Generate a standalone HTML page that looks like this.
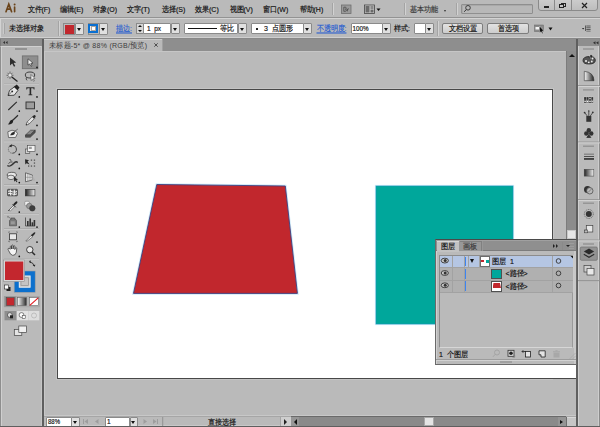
<!DOCTYPE html>
<html><head><meta charset="utf-8">
<style>
*{margin:0;padding:0;box-sizing:border-box}
html,body{width:600px;height:427px;overflow:hidden;background:#bababa;font-family:"Liberation Sans",sans-serif;font-size:7px;color:#111}
.a{position:absolute}
.t{position:absolute;white-space:nowrap;line-height:1;-webkit-text-stroke:0.15px currentColor;transform:scaleY(1.12);transform-origin:0 50%}
.box{position:absolute;background:#fff;border:1px solid #8a8a8a;border-radius:1px}
.dd{position:absolute;background:#e0e0e0;border:1px solid #8a8a8a;border-radius:1px}
.dd:after{content:"";position:absolute;left:50%;top:50%;margin-left:-2.5px;margin-top:-1px;border-left:2.5px solid transparent;border-right:2.5px solid transparent;border-top:3px solid #111}
.sep{position:absolute;width:1px;background:#a4a4a4;box-shadow:1px 0 0 #d2d2d2}
.btn{position:absolute;background:linear-gradient(#e2e2e2,#cdcdcd);border:1px solid #7d7d7d;border-radius:2px;text-align:center;line-height:10px;font-size:7px}
.lnk{color:#2a5fd0;text-decoration:underline;text-decoration-thickness:0.6px;text-underline-offset:0.5px}
.hd{position:absolute;background:#8e8e8e}
.ic{position:absolute}
</style></head><body>
<!-- ============ menu bar ============ -->
<div class="a" style="left:0;top:0;width:600px;height:17px;background:#bababa"></div>
<div class="a" style="left:0;top:17px;width:600px;height:1px;background:#939393"></div>
<svg class="a" style="left:0;top:0" width="20" height="17"><g stroke="#6a4319" stroke-width="1.65" fill="none" stroke-linecap="round"><path d="M6 11.7L8.8 4.1L11.6 11.7M7.1 9.1H10.5"/><path d="M14.6 7V11.7"/></g><circle cx="14.6" cy="4.5" r="1" fill="#6a4319"/></svg>
<div class="t" style="left:27.5px;top:5.5px">文件(F)</div>
<div class="t" style="left:60px;top:5.5px">编辑(E)</div>
<div class="t" style="left:93px;top:5.5px">对象(O)</div>
<div class="t" style="left:127px;top:5.5px">文字(T)</div>
<div class="t" style="left:162px;top:5.5px">选择(S)</div>
<div class="t" style="left:195px;top:5.5px">效果(C)</div>
<div class="t" style="left:229.5px;top:5.5px">视图(V)</div>
<div class="t" style="left:263px;top:5.5px">窗口(W)</div>
<div class="t" style="left:299.5px;top:5.5px">帮助(H)</div>
<div class="sep" style="left:332px;top:3px;height:12px"></div>
<!-- Br icon -->
<svg class="a" style="left:340px;top:4px" width="45" height="11">
<rect x="1.5" y="1" width="9.5" height="8.5" fill="#9a9a9a" stroke="#6e6e6e" stroke-width="0.8"/>
<path d="M3.8 3.2V7.3H5.3Q6.5 7.3 6.5 6.2Q6.5 5.3 5.4 5.2Q6.3 5 6.3 4.2Q6.3 3.2 5.2 3.2Z" fill="none" stroke="#444" stroke-width="0.7"/>
<path d="M7.5 7.3V4.8M7.5 5.6Q8 4.7 9 4.8" fill="none" stroke="#444" stroke-width="0.7"/>
<rect x="24.5" y="1" width="10" height="8.5" fill="#c8c8c8" stroke="#444" stroke-width="0.8"/>
<rect x="25.5" y="2" width="4" height="6.5" fill="#6a6a6a"/>
<rect x="30.5" y="2" width="3" height="3" fill="#8a8a8a"/><rect x="30.5" y="5.6" width="3" height="2.9" fill="#6a6a6a"/>
<path d="M36.5 4.5H40.5L38.5 7Z" fill="#111"/>
</svg>
<div class="sep" style="left:404px;top:3px;height:12px"></div>
<div class="t" style="left:410px;top:5.5px;color:#383838">基本功能</div>
<div class="a" style="left:444px;top:9.5px;border-left:1.5px solid transparent;border-right:1.5px solid transparent;border-top:2px solid #333"></div>
<div class="sep" style="left:456px;top:3px;height:12px"></div>
<!-- search -->
<div class="a" style="left:461px;top:3.5px;width:72px;height:10px;background:#b8b8b8;border:1px solid #8f8f8f;border-radius:1px;box-shadow:inset 1px 1px 0 #a9a9a9"></div>
<svg class="ic" style="left:463px;top:4px" width="9" height="9"><circle cx="5" cy="3.8" r="2.3" fill="none" stroke="#333" stroke-width="0.9"/><line x1="3.3" y1="5.5" x2="1.2" y2="7.8" stroke="#333" stroke-width="1"/></svg>
<!-- window buttons -->
<div class="a" style="left:538px;top:-2px;width:60px;height:13px;background:linear-gradient(#cdcdcd,#bdbdbd);border:1px solid #8a8a8a;border-radius:0 0 3px 3px"></div>
<div class="a" style="left:554px;top:0;width:1px;height:10px;background:#8a8a8a"></div>
<div class="a" style="left:571px;top:0;width:1px;height:10px;background:#8a8a8a"></div>
<div class="a" style="left:544px;top:6px;width:5px;height:1.5px;background:#222"></div>
<div class="a" style="left:561px;top:2.5px;width:5px;height:4px;border:1px solid #222"></div>
<div class="a" style="left:559px;top:4px;width:5px;height:4px;border:1px solid #222;background:#c5c5c5"></div>
<svg class="ic" style="left:581px;top:2px" width="7" height="7"><path d="M1 1L6 6M6 1L1 6" stroke="#222" stroke-width="1.2"/></svg>

<!-- ============ control bar ============ -->
<div class="a" style="left:0;top:18px;width:600px;height:20px;background:#bababa;border-top:1px solid #d3d3d3;border-left:1px solid #d3d3d3"></div>
<div class="a" style="left:0;top:37px;width:600px;height:1px;background:#cfcfcf"></div>
<div class="a" style="left:0;top:38px;width:600px;height:1px;background:#888"></div>
<div class="a" style="left:3px;top:22.5px;width:2px;height:11.5px;background:#cacaca;border-right:1px solid #a5a5a5"></div>
<div class="t" style="left:9px;top:25px">未选择对象</div>
<div class="sep" style="left:58px;top:21px;height:15px"></div>
<!-- fill -->
<div class="a" style="left:63px;top:23px;width:12px;height:11.5px;background:#bababa;border:1px solid #8a8a8a"></div>
<div class="a" style="left:64.5px;top:24.5px;width:9px;height:9px;background:#c1272d"></div>
<div class="dd" style="left:74.5px;top:23px;width:9px;height:12px"></div>
<!-- stroke -->
<div class="a" style="left:87.5px;top:23px;width:12px;height:12px;background:#bababa;border:1px solid #8a8a8a"></div>
<div class="a" style="left:88.2px;top:23.8px;width:9.8px;height:9.4px;border:2px solid #0a6fd0;background:#e8e8e8"></div>
<div class="a" style="left:90.6px;top:26.1px;width:5px;height:4.8px;border:1px solid #b0a59c;background:#fff"></div>
<div class="dd" style="left:99px;top:23px;width:9px;height:12px"></div>
<div class="t lnk" style="left:116px;top:24.5px">描边:</div>
<!-- spinner -->
<div class="a" style="left:135.5px;top:23px;width:8px;height:10.5px;background:#d6d6d6;border:1px solid #8a8a8a"></div>
<div class="a" style="left:137.5px;top:24.5px;border-left:2px solid transparent;border-right:2px solid transparent;border-bottom:2.5px solid #111"></div>
<div class="a" style="left:137.5px;top:29.5px;border-left:2px solid transparent;border-right:2px solid transparent;border-top:2.5px solid #111"></div>
<div class="box" style="left:143px;top:23px;width:28px;height:11px"></div>
<div class="t" style="left:147px;top:25.5px;font-size:6.5px">1&nbsp; px</div>
<div class="dd" style="left:170.5px;top:23px;width:9px;height:11px"></div>
<!-- stroke profile -->
<div class="box" style="left:184px;top:23px;width:54px;height:11px"></div>
<div class="a" style="left:188px;top:27.5px;width:29px;height:1.5px;background:#111"></div>
<div class="t" style="left:220px;top:25px">等比</div>
<div class="dd" style="left:237.5px;top:23px;width:9px;height:11px"></div>
<!-- brush -->
<div class="box" style="left:251px;top:23px;width:53px;height:11px"></div>
<div class="a" style="left:256px;top:28px;width:1.5px;height:1.5px;background:#222"></div>
<div class="t" style="left:264px;top:25px">3&nbsp; 点圆形</div>
<div class="dd" style="left:303px;top:23px;width:9px;height:11px"></div>
<div class="t lnk" style="left:316.5px;top:24.5px">不透明度:</div>
<div class="box" style="left:350.5px;top:23px;width:32px;height:11px"></div>
<div class="t" style="left:352.5px;top:25.5px;font-size:6.3px">100%</div>
<div class="dd" style="left:382px;top:23px;width:9px;height:11px"></div>
<div class="t" style="left:394px;top:24.5px">样式:</div>
<div class="box" style="left:414px;top:23px;width:12px;height:11px"></div>
<div class="dd" style="left:425px;top:23px;width:9px;height:11px"></div>
<div class="sep" style="left:437px;top:21px;height:15px"></div>
<div class="btn" style="left:442px;top:22.5px;width:41px;height:11.5px"><span style="display:inline-block;transform:scaleY(1.12);-webkit-text-stroke:0.15px currentColor">文档设置</span></div>
<div class="btn" style="left:487px;top:22.5px;width:42px;height:11.5px"><span style="display:inline-block;transform:scaleY(1.12);-webkit-text-stroke:0.15px currentColor">首选项</span></div>
<!-- isolate icon -->
<svg class="a" style="left:533px;top:23px" width="60" height="12">
<rect x="1.5" y="2" width="9" height="6.5" fill="#8a8a8a" stroke="#666" stroke-width="0.5"/>
<rect x="2.5" y="4" width="3.5" height="2.5" fill="#f4f4f4"/>
<path d="M6.5 3L6.5 10L8 8.7L9.3 10.8L10.2 10.3L9 8.2L11 7.9Z" fill="#111" stroke="#eee" stroke-width="0.4"/>
<path d="M15.5 4.5H19.5L17.5 7.5Z" fill="#111"/>
<path d="M49 5L51.3 5L50.15 6.5Z" fill="#222"/>
<g fill="#444"><rect x="52" y="2.5" width="0.8" height="5.5"/><rect x="53.3" y="2.6" width="4.3" height="0.8"/><rect x="53.3" y="4.4" width="4.3" height="0.8"/><rect x="53.3" y="6.2" width="4.3" height="0.8"/><rect x="53.3" y="7.8" width="4.3" height="0.6"/></g>
</svg>
<!-- ============ toolbar ============ -->
<div class="hd" style="left:0;top:39px;width:42px;height:7px"></div>
<svg class="a" style="left:3px;top:40.6px" width="6" height="4"><path d="M0 1.6L2 0.1V3.1ZM2.6 1.6L4.6 0.1V3.1Z" fill="#333"/></svg>
<div class="a" style="left:0;top:46px;width:42px;height:381px;background:#bababa;border-left:1px solid #8e8e8e;border-top:1px solid #d0d0d0;box-shadow:inset 1px 0 0 #cfcfcf"></div>
<div class="a" style="left:0;top:39px;width:1px;height:7px;background:#7a7a7a"></div>
<div class="a" style="left:15px;top:48px;width:12px;height:2px;background:#939393"></div>
<div class="a" style="left:40.5px;top:46px;width:1px;height:381px;background:#c6c6c6"></div>
<div class="a" style="left:42px;top:39px;width:2px;height:388px;background:#5f5f5f"></div>
<svg class="a" style="left:0;top:0" width="42" height="345">
<defs>
<linearGradient id="gr1" x1="0" x2="1"><stop offset="0" stop-color="#1a1a1a"/><stop offset="1" stop-color="#f4f4f4"/></linearGradient>
<linearGradient id="gr2" x1="0" x2="1"><stop offset="0" stop-color="#fafafa"/><stop offset="1" stop-color="#2a2a2a"/></linearGradient>
</defs>
<!-- separators -->
<g fill="#a6a6a6">
<rect x="4" y="83" width="35" height="0.8"/><rect x="4" y="140.8" width="35" height="0.8"/>
<rect x="4" y="184.3" width="35" height="0.8"/><rect x="4" y="213.6" width="35" height="0.8"/>
<rect x="4" y="228.3" width="35" height="0.8"/><rect x="4" y="258" width="35" height="0.8"/>
</g>
<g fill="#d4d4d4">
<rect x="4" y="83.8" width="35" height="0.6"/><rect x="4" y="141.6" width="35" height="0.6"/>
<rect x="4" y="185.1" width="35" height="0.6"/><rect x="4" y="214.4" width="35" height="0.6"/>
<rect x="4" y="229.1" width="35" height="0.6"/><rect x="4" y="258.8" width="35" height="0.6"/>
</g>
<!-- selection -->
<path d="M10 57.5L10 65.5L12.2 63.6L14 66.8L15.3 66.1L13.6 63L16.2 62.6Z" fill="#2e2e2e"/>
<rect x="22.3" y="55.9" width="15.6" height="12.8" fill="#8e8e8e" stroke="#6c6c6c" stroke-width="0.8"/>
<path d="M28 58.8L28 65.2L29.6 63.9L31 66.4L32 65.9L30.8 63.4L33 63.1Z" fill="#f0f0f0" stroke="#222" stroke-width="0.6"/>
<!-- magic wand -->
<g stroke="#555" stroke-width="0.8" fill="none"><path d="M10 71.5v2M10 77v2M6.5 75.3h2M11.5 75.3h2M7.5 72.8l1.2 1.2M12.5 72.8l-1.2 1.2M7.5 77.8l1.2-1.2"/></g>
<circle cx="10" cy="75.3" r="1.8" fill="#e8e8e8" stroke="#666" stroke-width="0.5"/>
<path d="M11.5 76.8L17.5 81.5" stroke="#222" stroke-width="1.3"/>
<!-- lasso -->
<ellipse cx="30" cy="75" rx="4.7" ry="3" fill="none" stroke="#333" stroke-width="0.9"/>
<path d="M26.5 77.2q-1 2 0.5 3.2" fill="none" stroke="#333" stroke-width="0.8"/>
<path d="M31 74.5L31 80.5L32.4 79.3L33.6 81.3L34.4 80.8L33.2 78.8L35 78.5Z" fill="#f4f4f4" stroke="#333" stroke-width="0.5"/>
<!-- pen -->
<path d="M8 95.5L9.5 90.5L14.5 86.8L18 90.3L14.3 95.2Z" fill="#e6e6e6" stroke="#222" stroke-width="0.8"/>
<path d="M13.8 86.8L16.8 84.6L19.5 87.4L17.6 90.2Z" fill="#222"/>
<circle cx="12.2" cy="91.4" r="0.9" fill="#222"/><path d="M8 95.5L11.6 92" stroke="#222" stroke-width="0.6"/>
<!-- type -->
<path d="M26.3 87.2H34.5V89.6H33.8L33.3 88.3H31.2V94.3L32.3 94.6V95.3H28.5V94.6L29.6 94.3V88.3H27.5L27 89.6H26.3Z" fill="#2a2a2a"/>
<!-- line -->
<path d="M8.3 110L16.8 101.8" stroke="#2a2a2a" stroke-width="1.1"/>
<!-- rect -->
<rect x="26" y="102" width="8.5" height="6.8" fill="#9d9d9d" stroke="#2e2e2e" stroke-width="0.9"/>
<!-- paintbrush -->
<path d="M18 115.3L12.5 120.5" stroke="#2a2a2a" stroke-width="1.2"/>
<path d="M12.8 119.8Q10.5 119.5 9.8 121.5Q9.2 123.5 7.8 124.3Q11 124.8 12.5 123Q13.6 121.6 12.8 119.8Z" fill="#222"/>
<!-- pencil -->
<path d="M26 125.2L26.8 122.3L33 116.1L35 118.1L28.8 124.3Z" fill="#e6e6e6" stroke="#333" stroke-width="0.6"/>
<path d="M32.2 116.9L33.8 115.3Q34.6 114.7 35.4 115.5Q36.1 116.3 35.5 117.1L33.9 118.7Z" fill="#2a2a2a"/>
<path d="M27.2 121.9L29.3 124" stroke="#333" stroke-width="0.5"/><path d="M26 125.2L26.5 123.8L27.4 124.7Z" fill="#222"/>
<!-- blob brush -->
<path d="M7.8 131.8L12 130.2L15.8 131.2L17.5 133.5L15.5 137.5H8.5Z" fill="#ececec" stroke="#555" stroke-width="0.8"/>
<path d="M10 135.2Q11.5 132 14 131.8Q15.6 132.2 14.6 134Q13 135.8 10 135.2Z" fill="#2a2a2a"/>
<path d="M13.8 132.2L17.8 129" stroke="#444" stroke-width="0.7"/>
<!-- eraser -->
<path d="M25.5 135L30.5 130.2H35.2L30.3 135Z" fill="#8a8a8a" stroke="#333" stroke-width="0.6"/>
<path d="M25.5 135V137.2H30.3L35.2 132.5V130.2L30.3 135Z" fill="#555" stroke="#333" stroke-width="0.6"/>
<!-- rotate -->
<path d="M11 145.3Q15.8 144.8 16.4 149Q16.6 152.8 12.6 153.2" fill="none" stroke="#444" stroke-width="1"/>
<path d="M12.6 153.2Q8.8 153.2 8.4 149.4Q8.4 147.5 9.4 146.5" fill="none" stroke="#555" stroke-width="0.9" stroke-dasharray="0.9 0.9"/>
<path d="M8.6 146.3L11.8 144.2L11.6 147.2Z" fill="#222"/>
<!-- scale -->
<rect x="25.3" y="149" width="4.5" height="4.3" fill="#d0d0d0" stroke="#444" stroke-width="0.6"/>
<rect x="27.6" y="145.3" width="7.4" height="6.2" fill="#f2f2f2" stroke="#444" stroke-width="0.6"/>
<rect x="28.8" y="146.8" width="3" height="2.2" fill="#999"/>
<!-- width -->
<path d="M7.5 166.3Q9.5 166 11.5 164.3Q13.5 162.2 15 161.3Q16.8 160.5 17.8 161.5Q18.3 162.5 17.2 163.2Q16.2 162 14.8 163.3Q13 165.2 11 166.3Q9 167.2 7.5 166.3Z" fill="#333"/>
<path d="M8.5 163.8Q10 161 12.5 162M9.5 159.5Q10.8 159.2 11 160.8" fill="none" stroke="#333" stroke-width="0.8"/>
<circle cx="8" cy="165.8" r="0.8" fill="#333"/>
<!-- free transform -->
<g fill="#555"><rect x="30.8" y="159.5" width="1.3" height="1.3"/><rect x="33.8" y="159.5" width="1.3" height="1.3"/>
<rect x="33.8" y="162.4" width="1.3" height="1.3"/>
<rect x="28" y="165.4" width="1.3" height="1.3"/><rect x="30.8" y="165.4" width="1.3" height="1.3"/><rect x="33.8" y="165.4" width="1.3" height="1.3"/></g>
<path d="M25 159.2L25.3 164.6L26.6 163.3L29.6 164.4L27.5 161.6L29 160.3Z" fill="#2a2a2a"/>
<!-- shape builder -->
<ellipse cx="11.8" cy="175" rx="4.6" ry="2.7" fill="#e8e8e8" stroke="#444" stroke-width="0.8"/>
<ellipse cx="11" cy="177.4" rx="3.6" ry="2.2" fill="#e0e0e0" stroke="#444" stroke-width="0.7"/>
<path d="M13.8 176.3L14.2 181.8L15.4 180.6L16.6 182.3L17.4 181.8L16.3 180.2L18 179.9Z" fill="#2a2a2a"/>
<!-- perspective -->
<path d="M25.5 172.8L32.3 175V180L25.5 181.8Z" fill="#e4e4e4" stroke="#444" stroke-width="0.7"/>
<path d="M32.3 175.3L35.5 180.8H32.3Z" fill="#b0b0b0"/>
<path d="M27.8 173.5V181.2M30 174.2V180.6M25.5 177.3H32.3" stroke="#777" stroke-width="0.5"/>
<!-- mesh -->
<rect x="7.5" y="189.3" width="10" height="6.6" rx="0.8" fill="#6a6a6a" stroke="#333" stroke-width="0.6"/>
<path d="M8 191.3Q10 190.3 12.5 191.8Q15 192.8 17 191.5M8 193.8Q10 192.8 12.5 194Q15 195 17 193.8M10.5 189.6Q9.8 192.5 10.8 195.6M14.2 189.6Q15 192.5 14 195.6" fill="none" stroke="#f4f4f4" stroke-width="1"/>
<!-- gradient -->
<rect x="25.3" y="189.3" width="9.6" height="6.6" fill="url(#gr1)" stroke="#333" stroke-width="0.6"/>
<!-- eyedropper -->
<path d="M8.3 210.8L14 205" stroke="#333" stroke-width="1" />
<path d="M9 210L13.3 205.6L14.5 206.8L10.2 211.2Z" fill="#eee" stroke="#333" stroke-width="0.5"/>
<path d="M13.2 204.2L15.6 201.8Q16.6 201 17.2 201.6Q17.8 202.3 17 203.2L14.6 205.6Z" fill="#222"/>
<path d="M12.5 204L15.8 207.3" stroke="#222" stroke-width="0.9"/>
<!-- blend -->
<rect x="24.8" y="201.3" width="4.5" height="4.5" rx="1" fill="#f0f0f0" stroke="#666" stroke-width="0.5"/>
<circle cx="29.3" cy="206" r="2.8" fill="#9a9a9a" stroke="#555" stroke-width="0.5"/>
<circle cx="32.3" cy="208.3" r="2.8" fill="#3e3e3e" stroke="#333" stroke-width="0.5"/>
<!-- symbol sprayer -->
<path d="M11 218H14.8V219.5H15.8Q16.5 220 16.5 221V225.8H9.5V221Q9.5 220 10.3 219.5H11Z" fill="#7a7a7a" stroke="#444" stroke-width="0.6"/>
<rect x="10.8" y="221.3" width="4" height="3" fill="#9a9a9a"/>
<path d="M11 218.6L8.5 217" stroke="#666" stroke-width="0.7"/><circle cx="8" cy="216.8" r="1" fill="#888"/>
<!-- graph -->
<path d="M25.5 217.5V226H35" fill="none" stroke="#333" stroke-width="0.7"/>
<rect x="27" y="221" width="1.6" height="5" fill="#333"/><rect x="29.4" y="218.5" width="1.6" height="7.5" fill="#333"/>
<rect x="31.6" y="222.3" width="1.6" height="3.7" fill="#333"/><rect x="33.6" y="220" width="1.6" height="6" fill="#333"/>
<!-- artboard -->
<rect x="9.5" y="233.8" width="7" height="6" fill="#e8e8e8" stroke="#333" stroke-width="0.8"/>
<path d="M8 232.2h1.2M8 241.3h1.2M16.8 232.2h1.2M16.8 241.3h1.2M9.5 231.5v0.8M16.5 231.5v0.8M9.5 241.2v1M16.5 241.2v1" stroke="#555" stroke-width="0.6"/>
<!-- slice -->
<path d="M25.8 241L31.2 235.5L32.6 236.9L27 241.2Z" fill="#f0f0f0" stroke="#444" stroke-width="0.6"/>
<path d="M30.8 235.2L34 232.4Q35.3 231.8 35.4 232.8Q35.2 233.8 33.5 235.6L32.4 236.6Z" fill="#2a2a2a"/>
<!-- hand -->
<path d="M8.6 250.5Q7.6 249 8.3 248.4Q9.2 247.9 10.2 249.3L10.3 246.6Q10.6 245.7 11.4 246.2L11.6 249L11.7 245.4Q12.3 244.6 13 245.3L13.1 249L13.5 246Q14.2 245.3 14.9 246.1L14.8 249.5L15.5 247.8Q16.3 247.3 16.8 248.1L16.3 252.3Q15.7 255.3 12.8 255.4Q10.3 255.2 8.6 250.5Z" fill="#f4f4f4" stroke="#2a2a2a" stroke-width="0.7"/>
<!-- zoom -->
<circle cx="29.8" cy="249.7" r="3.2" fill="#e8e8e8" stroke="#2a2a2a" stroke-width="0.9"/>
<path d="M32.2 252.2L35 255" stroke="#2a2a2a" stroke-width="1.5"/>
<!-- submenu markers -->
<g fill="#111">
<circle cx="37" cy="67.4" r="0.85"/>
<circle cx="19.3" cy="96.9" r="0.85"/><circle cx="37" cy="96.9" r="0.85"/>
<circle cx="19.3" cy="111.1" r="0.85"/><circle cx="37" cy="111.1" r="0.85"/>
<circle cx="37" cy="125.4" r="0.85"/>
<circle cx="37" cy="139.1" r="0.85"/>
<circle cx="19.3" cy="154.4" r="0.85"/><circle cx="37" cy="154.4" r="0.85"/>
<circle cx="19.3" cy="168.4" r="0.85"/>
<circle cx="19.3" cy="182.6" r="0.85"/><circle cx="37" cy="182.6" r="0.85"/>
<circle cx="19.3" cy="212.1" r="0.85"/>
<circle cx="19.3" cy="227.1" r="0.85"/><circle cx="37" cy="227.1" r="0.85"/>
<circle cx="37" cy="242.1" r="0.85"/>
<circle cx="19.3" cy="256.4" r="0.85"/>
</g>
<!-- fill / stroke -->
<rect x="14.2" y="271" width="21" height="21.3" fill="#0c70cd" stroke="#a0a0a0" stroke-width="0.6"/>
<rect x="19.3" y="276" width="10.8" height="11.2" fill="#c4c4c4" stroke="#f0f0f0" stroke-width="1"/>
<rect x="21" y="277.8" width="7.4" height="7.6" fill="#c4c4c4" stroke="#8a8a8a" stroke-width="0.6"/>
<rect x="3.6" y="260" width="21" height="21.6" fill="#d8d8d8" stroke="#8f8f8f" stroke-width="0.6"/>
<rect x="5" y="261.5" width="18.3" height="18.5" fill="#c3272e"/>
<path d="M29.5 262.2Q33 262 34 265.5" fill="none" stroke="#222" stroke-width="0.8"/>
<path d="M29 261L30.8 260.6L30.5 263.2Z M34.6 266.8L32.6 265L35.4 264.8Z" fill="#222"/>
<rect x="6.5" y="287" width="4" height="4" fill="#222"/><rect x="4.5" y="285" width="4" height="4" fill="#fff" stroke="#222" stroke-width="0.6"/>
<!-- color mode buttons -->
<rect x="4.2" y="296.3" width="35" height="10.6" fill="#b4b4b4" stroke="#9a9a9a" stroke-width="0.5"/>
<rect x="4.6" y="296.6" width="11.5" height="10" fill="#8c8c8c"/>
<rect x="6.6" y="297.7" width="7.6" height="7.8" fill="#c3272e" stroke="#444" stroke-width="0.5"/>
<rect x="17.6" y="297.7" width="8.8" height="7.8" fill="url(#gr2)" stroke="#555" stroke-width="0.5"/>
<rect x="29.6" y="297.7" width="8.8" height="7.8" fill="#fff" stroke="#555" stroke-width="0.5"/>
<path d="M29.8 305.3L38.2 297.9" stroke="#e0161c" stroke-width="1.1"/>
<!-- draw modes -->
<rect x="4.5" y="311" width="12" height="9.3" fill="#8e8e8e"/>
<rect x="16.8" y="311" width="11.8" height="9.3" fill="#e2e2e2"/>
<rect x="28.8" y="311" width="10.5" height="9.3" fill="#dedede"/>
<circle cx="9.8" cy="315" r="2.4" fill="#ddd" stroke="#333" stroke-width="0.6"/><rect x="10" y="315.3" width="3" height="3" fill="#222"/>
<circle cx="21.5" cy="315" r="2.4" fill="#fff" stroke="#333" stroke-width="0.6"/><rect x="22.2" y="315.5" width="3" height="2.8" fill="#fff" stroke="#333" stroke-width="0.5"/>
<circle cx="34" cy="315.5" r="2.5" fill="none" stroke="#aaa" stroke-width="0.6"/>
<!-- screen mode -->
<rect x="14.3" y="329.5" width="7.5" height="6" fill="#e4e4e4" stroke="#444" stroke-width="0.7"/>
<rect x="18.8" y="326" width="7.8" height="6.5" fill="#f0f0f0" stroke="#444" stroke-width="0.7"/>
</svg>


<!-- ============ doc tab bar ============ -->
<div class="hd" style="left:44px;top:39px;width:532px;height:12px"></div>
<div class="a" style="left:44px;top:39px;width:118px;height:12.5px;background:#b9b9b9;border-top:1px solid #cfcfcf"></div>
<div class="a" style="left:161.5px;top:39px;width:0.8px;height:12px;background:#a0a0a0"></div>
<div class="t" style="left:49px;top:41.5px;color:#3c3c3c;letter-spacing:0.27px;-webkit-text-stroke:0">未标题-5* @ 88% (RGB/预览)</div>
<svg class="ic" style="left:154px;top:42.5px" width="4" height="4"><path d="M0.3 0.3L3.7 3.7M3.7 0.3L0.3 3.7" stroke="#333" stroke-width="0.8"/></svg>

<!-- ============ canvas ============ -->
<div class="a" style="left:44px;top:51px;width:532px;height:1px;background:#c6c6c6"></div>
<div class="a" style="left:44px;top:52px;width:522px;height:364px;background:#bababa"></div>
<div class="a" style="left:44px;top:51px;width:1px;height:365px;background:#c8c8c8"></div>
<div class="a" style="left:57px;top:89px;width:496px;height:290px;background:#fff;border:1px solid #484848;box-shadow:0 0 0 1px #c4c4c4"></div>
<!-- white repaint below panel -->
<div class="a" style="left:552px;top:365px;width:24px;height:13px;background:#fff"></div>
<div class="a" style="left:552px;top:378px;width:24px;height:1px;background:#484848"></div>
<div class="a" style="left:553px;top:379px;width:23px;height:37px;background:#bababa"></div>
<svg class="a" style="left:0;top:0" width="600" height="427">
<polygon points="156.8,184.5 285.3,186 297.4,293.4 133.5,293.4" fill="none" stroke="#cfeaf8" stroke-width="2.6"/>
<polygon points="156.8,184.5 285.3,186 297.4,293.4 133.5,293.4" fill="#c1272d" stroke="#3b3f80" stroke-width="0.9"/>
<rect x="375.8" y="185.8" width="137.4" height="138.4" fill="none" stroke="#cdeaf8" stroke-width="1.8"/>
<rect x="376" y="186" width="137" height="138" fill="#00a79b" stroke="#1595b5" stroke-width="0.6"/>
</svg>
<!-- vscroll -->
<div class="a" style="left:566px;top:51px;width:10px;height:314px;background:#8c8c8c;border-left:1px solid #7c7c7c"></div>
<div class="a" style="left:568.5px;top:54.3px;border-left:3px solid transparent;border-right:3px solid transparent;border-bottom:3.5px solid #111"></div>
<div class="a" style="left:567px;top:229.5px;width:9px;height:9px;background:#e6e6e6;border:1px solid #c8c8c8"></div>
<div class="a" style="left:576px;top:39px;width:2px;height:388px;background:#5f5f5f"></div>

<!-- ============ right panel ============ -->
<div class="hd" style="left:578px;top:39px;width:22px;height:7px"></div>
<svg class="a" style="left:592.5px;top:41px" width="6" height="4"><path d="M0 1.8L2.5 0.2V3.4ZM3 1.8L5.5 0.2V3.4Z" fill="#333"/></svg>
<div class="a" style="left:578px;top:46px;width:22px;height:381px;background:#bababa;border-left:1px solid #d0d0d0"></div>
<div class="a" style="left:597.5px;top:46px;width:1px;height:381px;background:#cdcdcd"></div>
<div class="a" style="left:598.5px;top:39px;width:1.5px;height:388px;background:#8a8a8a"></div>
<svg class="a" style="left:578px;top:39px" width="22" height="250">
<defs><linearGradient id="rg1" x1="0" x2="1" y1="0" y2="0"><stop offset="0" stop-color="#f8f8f8"/><stop offset="1" stop-color="#222"/></linearGradient>
<linearGradient id="rg3" x1="0" x2="1"><stop offset="0" stop-color="#222"/><stop offset="1" stop-color="#f4f4f4"/></linearGradient><radialGradient id="rg2" cx="0" cy="1" r="1"><stop offset="0" stop-color="#f5f5f5"/><stop offset="1" stop-color="#3a3a3a"/></radialGradient></defs>
<!-- group seps & grips (y relative to 39) -->
<g fill="#8e8e8e"><rect x="0" y="46.2" width="22" height="0.9"/><rect x="0" y="102.6" width="22" height="0.9"/><rect x="0" y="160.3" width="22" height="0.9"/><rect x="0" y="200.6" width="22" height="0.9"/><rect x="0" y="241.2" width="22" height="0.9"/></g>
<g fill="#dadada"><rect x="0" y="47.1" width="22" height="0.8"/><rect x="0" y="103.5" width="22" height="0.8"/><rect x="0" y="161.2" width="22" height="0.8"/><rect x="0" y="201.5" width="22" height="0.8"/></g>
<g fill="#939393"><rect x="5" y="9.3" width="11" height="1.4"/><rect x="5" y="50.2" width="11" height="1.4"/><rect x="5" y="106.5" width="11" height="1.4"/><rect x="5" y="163.5" width="11" height="1.4"/><rect x="5" y="204.3" width="11" height="1.4"/></g>
<!-- palette -->
<path d="M5 21.5Q5 17.8 11 17.5Q17 17.3 17.3 21Q17.5 24.8 11.5 25Q5 25.2 5 21.5Z" fill="#555" stroke="#222" stroke-width="0.8"/><path d="M10.5 18.5L13 15.8L14.5 17L12 19.5Z" fill="#222"/>
<g fill="#eee"><circle cx="8" cy="22" r="1"/><circle cx="10.8" cy="23.3" r="0.9"/><circle cx="13.8" cy="22.5" r="0.9"/><circle cx="14.5" cy="19.5" r="0.9"/></g>
<path d="M11.5 16.5L12.5 19.5" stroke="#ddd" stroke-width="0.6"/>
<!-- color guide -->
<path d="M6.3 32.3V41.7H16Q15.8 33.3 6.3 32.3Z" fill="url(#rg1)" stroke="#333" stroke-width="0.6"/>
<!-- swatches -->
<rect x="5.8" y="57.8" width="9.6" height="6.4" fill="#dcdcdc"/>
<g fill="#333"><rect x="6.1" y="58.1" width="2.1" height="2.8"/><rect x="8.5" y="58.1" width="2.1" height="2.8"/><rect x="10.9" y="58.1" width="2.1" height="2.8"/><rect x="13.3" y="58.1" width="1.9" height="2.8"/>
<rect x="6.1" y="61.2" width="2.1" height="2.8"/><rect x="10.9" y="61.2" width="2.1" height="2.8"/></g>
<g fill="#555"><rect x="8.5" y="61.2" width="2.1" height="2.8"/><rect x="13.3" y="61.2" width="1.9" height="2.8"/></g>
<g fill="#f4f4f4"><circle cx="7.1" cy="62.6" r="0.8"/><circle cx="9.5" cy="62.6" r="0.8"/><circle cx="12" cy="62.6" r="0.8"/><circle cx="12" cy="59.5" r="0.7"/><circle cx="14.2" cy="62.6" r="0.7"/></g>
<!-- brushes -->
<rect x="8.3" y="77" width="5" height="5.8" fill="#333"/>
<path d="M10.8 77V72.3M9.3 77L6.8 73.8M12.3 77L14.8 73.5" stroke="#333" stroke-width="0.8"/>
<circle cx="10.8" cy="72" r="0.8" fill="#333"/><circle cx="6.6" cy="73.6" r="0.9" fill="#333"/><circle cx="14.8" cy="73.3" r="0.9" fill="#333"/>
<!-- club -->
<circle cx="10.8" cy="91.2" r="2.2" fill="#333"/><circle cx="8.3" cy="94.5" r="2.2" fill="#333"/><circle cx="13.3" cy="94.5" r="2.2" fill="#333"/>
<path d="M10.8 93V97.5M8.8 98.4H12.8L10.8 96Z" stroke="#333" stroke-width="0.9" fill="#333"/>
<!-- stroke -->
<rect x="6" y="114.8" width="10" height="0.6" fill="#444"/><rect x="6" y="117" width="10" height="0.8" fill="#333"/><rect x="6" y="119.2" width="10" height="1.5" fill="#222"/>
<!-- gradient -->
<rect x="6.2" y="130.3" width="9.6" height="6.8" fill="url(#rg3)" stroke="#444" stroke-width="0.5"/>
<!-- transparency -->
<circle cx="9.5" cy="150.5" r="3.5" fill="#333"/><circle cx="11.8" cy="151.8" r="3.2" fill="#bbb" stroke="#444" stroke-width="0.7"/>
<path d="M10 153.5L13.5 150" stroke="#444" stroke-width="0.5"/>
<!-- appearance -->
<circle cx="10.8" cy="175" r="4.5" fill="none" stroke="#555" stroke-width="0.8" stroke-dasharray="1 0.8"/>
<circle cx="10.8" cy="175" r="3" fill="#333"/>
<!-- graphic styles -->
<rect x="8.3" y="186.5" width="6.5" height="6.5" fill="#e6e6e6" stroke="#444" stroke-width="0.7"/>
<rect x="6.2" y="190.6" width="3.5" height="3.5" fill="#444"/><circle cx="8" cy="192.4" r="1.2" fill="#bbb"/>
<!-- layers highlighted -->
<rect x="2.3" y="208" width="17" height="13.3" rx="1.2" fill="#939393" stroke="#707070" stroke-width="0.7"/>
<path d="M5.8 212.6L11 209.6L16.2 212.6L11 215.6Z" fill="#2a2a2a"/>
<path d="M5.8 215.2L11 218.3L16.2 215.2" fill="none" stroke="#2a2a2a" stroke-width="1.1"/>
<!-- artboards -->
<rect x="6" y="226.5" width="7" height="6.5" fill="#cfcfcf" stroke="#444" stroke-width="0.7"/>
<rect x="9" y="229.5" width="7" height="6.5" fill="#e8e8e8" stroke="#444" stroke-width="0.7"/>
</svg>

<!-- ============ status bar ============ -->
<div class="a" style="left:44px;top:415px;width:532px;height:1px;background:#c8c8c8"></div>
<div class="a" style="left:44px;top:416px;width:532px;height:10px;background:#bababa;border-top:1px solid #a6a6a6"></div>
<div class="a" style="left:44px;top:425px;width:247px;height:1px;background:#c8c8c8"></div>
<div class="box" style="left:46px;top:417px;width:25.5px;height:10px"></div>
<div class="t" style="left:48px;top:419px;font-size:6px">88%</div>
<div class="dd" style="left:71px;top:417px;width:8.5px;height:10px"></div>
<div class="box" style="left:104.5px;top:417px;width:25px;height:10px"></div>
<div class="t" style="left:107px;top:419px;font-size:6.5px">1</div>
<div class="dd" style="left:129.5px;top:417px;width:8.5px;height:10px"></div>
<svg class="a" style="left:80px;top:416px" width="85" height="11">
<g fill="#9d9d9d"><rect x="3" y="3" width="1" height="5"/><path d="M4.5 5.5L8 3V8Z"/><path d="M15 5.5L18.5 3V8Z"/>
<path d="M63.5 3L67 5.5L63.5 8Z"/><path d="M73 3L76.5 5.5L73 8Z"/><rect x="77" y="3" width="1" height="5"/></g>
<rect x="82.2" y="1" width="1" height="9.5" fill="#929292"/>
</svg>
<div class="t" style="left:207.5px;top:419px">直接选择</div>
<div class="a" style="left:279.5px;top:417px;width:11px;height:9px;background:#cecece;border-left:1px solid #a4a4a4"></div>
<div class="a" style="left:283.5px;top:419px;border-top:3px solid transparent;border-bottom:3px solid transparent;border-left:3.5px solid #222"></div>
<div class="a" style="left:291px;top:416px;width:275px;height:1.3px;background:#6a6a6a"></div>
<div class="a" style="left:291px;top:417.3px;width:275px;height:8.7px;background:#8a8a8a"></div>
<div class="a" style="left:291px;top:417.3px;width:8px;height:8.7px;background:#969696"></div>
<div class="a" style="left:294.3px;top:419px;border-top:3px solid transparent;border-bottom:3px solid transparent;border-right:3.5px solid #111"></div>
<div class="a" style="left:424px;top:417px;width:9.5px;height:9px;background:#e4e4e4;border:1px solid #a8a8a8"></div>
<div class="a" style="left:558px;top:417px;width:7.5px;height:9px;background:#959595"></div>
<div class="a" style="left:559.5px;top:419.5px;border-top:2.5px solid transparent;border-bottom:2.5px solid transparent;border-left:3.5px solid #111"></div>
<div class="a" style="left:565.5px;top:417px;width:1px;height:9px;background:#6e6e6e"></div>
<div class="a" style="left:566.5px;top:417px;width:9.5px;height:9px;background:#c6c6c6;border-top:1px solid #d8d8d8"></div>
<div class="a" style="left:0;top:426px;width:600px;height:1px;background:#5f5f5f"></div>

<!-- ============ layers panel ============ -->
<div class="a" style="left:435px;top:239px;width:142px;height:126px;background:#bababa;border:1px solid #6a6a6a;border-top-color:#4a4a4a;box-shadow:inset 1px 1px 0 #d0d0d0, inset -2px 0 0 #c8c8c8"></div>
<div class="a" style="left:436px;top:240px;width:140px;height:11px;background:#8f8f8f;border-top:1px solid #a0a0a0;border-bottom:1px solid #7c7c7c"></div>
<div class="a" style="left:459px;top:241px;width:23px;height:10px;background:#989898;border:1px solid #808080;border-bottom:0"></div>
<div class="a" style="left:436.5px;top:240.5px;width:22.5px;height:11px;background:#c2c2c2;border-top:1px solid #d6d6d6"></div>
<div class="a" style="left:459px;top:241px;width:1px;height:10px;background:#979797"></div>
<div class="a" style="left:481.5px;top:241px;width:1px;height:10px;background:#979797"></div>
<div class="t" style="left:440.5px;top:242.5px">图层</div>
<div class="t" style="left:463px;top:242.5px;color:#3a3a3a">画板</div>
<div class="a" style="left:553px;top:244px;border-top:2px solid transparent;border-bottom:2px solid transparent;border-left:2.5px solid #222"></div>
<div class="a" style="left:556px;top:244px;border-top:2px solid transparent;border-bottom:2px solid transparent;border-left:2.5px solid #222"></div>
<div class="a" style="left:562px;top:242px;width:1px;height:8px;background:#8a8a8a"></div>
<div class="a" style="left:565.5px;top:245px;border-left:2px solid transparent;border-right:2px solid transparent;border-top:2.5px solid #222"></div>
<div class="a" style="left:569px;top:243px;width:5px;height:6px;border-top:1px solid #9c9c9c;border-bottom:1px solid #9c9c9c"></div>
<div class="a" style="left:569px;top:245.5px;width:5px;height:1px;background:#9c9c9c"></div>
<!-- list -->
<div class="a" style="left:439px;top:254.5px;width:134px;height:93.5px;background:#bababa;border:1px solid #8c8c8c;border-right-color:#9a9a9a;border-bottom-color:#d6d6d6;box-shadow:1px 0 0 #cacaca"></div>
<div class="a" style="left:440px;top:255.5px;width:133px;height:11.7px;background:#b5c6e3"></div>
<div class="a" style="left:440px;top:267.2px;width:133px;height:24.8px;background:#b0b0b0"></div>
<div class="a" style="left:440px;top:267px;width:133px;height:1px;background:#a2a2a2"></div>
<div class="a" style="left:440px;top:279.5px;width:133px;height:1px;background:#a2a2a2"></div>
<div class="a" style="left:440px;top:291.5px;width:133px;height:1px;background:#a2a2a2"></div>
<div class="a" style="left:451.5px;top:255.5px;width:1px;height:36px;background:#a2a2a2"></div>
<div class="a" style="left:463.5px;top:255.5px;width:1px;height:36px;background:#a2a2a2"></div>
<div class="a" style="left:467.5px;top:255.5px;width:1px;height:11.5px;background:#a2a2a2"></div>
<div class="a" style="left:478.8px;top:255.5px;width:1px;height:11.5px;background:#a2a2a2"></div>
<div class="a" style="left:552px;top:255.5px;width:1px;height:36px;background:#a2a2a2"></div>
<div class="a" style="left:464.6px;top:256.5px;width:1.7px;height:9.5px;background:#3d84f0"></div>
<div class="a" style="left:464.6px;top:268.5px;width:1.7px;height:10px;background:#3d84f0"></div>
<div class="a" style="left:464.6px;top:281px;width:1.7px;height:10px;background:#3d84f0"></div>
<svg class="a" style="left:439px;top:255px" width="14" height="37">
<g stroke="#333" stroke-width="0.9" fill="#c8c8c8">
<ellipse cx="5.8" cy="5.6" rx="3.6" ry="2.4"/><ellipse cx="5.8" cy="18" rx="3.6" ry="2.4"/><ellipse cx="5.8" cy="30.3" rx="3.6" ry="2.4"/></g>
<g fill="#333"><circle cx="6.2" cy="5.6" r="1.5"/><circle cx="6.2" cy="18" r="1.5"/><circle cx="6.2" cy="30.3" r="1.5"/></g>
</svg>
<div class="a" style="left:470px;top:259px;border-left:2.6px solid transparent;border-right:2.6px solid transparent;border-top:4px solid #111"></div>
<div class="a" style="left:479.7px;top:256px;width:10.6px;height:10.7px;background:#fff;border:1px solid #6d6d6d"></div>
<div class="a" style="left:481px;top:260px;width:3px;height:2px;background:#c1272d"></div>
<div class="a" style="left:486px;top:259.5px;width:3px;height:3px;background:#00a79b"></div>
<div class="t" style="left:492px;top:258px">图层&nbsp; 1</div>
<div class="a" style="left:491.4px;top:268.5px;width:10.5px;height:10.5px;background:#00a79b;border:1px solid #505050"></div>
<div class="t" style="left:505.5px;top:270px">&lt;路径&gt;</div>
<div class="a" style="left:491.4px;top:281px;width:10.5px;height:10.5px;background:#fff;border:1px solid #505050"></div>
<div class="a" style="left:492.5px;top:283px;width:8.5px;height:5px;background:#c1272d;clip-path:polygon(12% 0,88% 0,100% 100%,0 100%)"></div>
<div class="t" style="left:505.5px;top:282.5px">&lt;路径&gt;</div>
<svg class="a" style="left:553px;top:255px" width="12" height="37">
<g fill="none" stroke="#333" stroke-width="0.9"><circle cx="5.5" cy="6" r="2.3"/><circle cx="5.5" cy="18.3" r="2.3"/><circle cx="5.5" cy="30.5" r="2.3"/></g></svg>
<div class="a" style="left:570px;top:255.5px;width:3px;height:3px;background:#111;clip-path:polygon(0 0,100% 0,100% 100%)"></div>
<!-- footer -->
<div class="t" style="left:439px;top:350.5px">1&nbsp; 个图层</div>
<svg class="a" style="left:490px;top:348px" width="86" height="12">
<g fill="none" stroke="#a2a2a2" stroke-width="0.9"><circle cx="7" cy="4.5" r="2.5"/><path d="M5.2 6.3L3 8.8"/></g>
<rect x="18" y="2.3" width="6" height="6" fill="#d8d8d8" stroke="#333" stroke-width="0.8"/>
<circle cx="21" cy="5.3" r="1.8" fill="#222"/><path d="M22.5 9.3h2.2v-2.2" stroke="#777" stroke-width="0.6" fill="none"/>
<path d="M32 3.5H35.2M33.3 2.2L32 3.5L33.3 4.8" stroke="#222" stroke-width="0.8" fill="none"/>
<rect x="35.5" y="3.5" width="5" height="5.5" fill="#e4e4e4" stroke="#222" stroke-width="0.8"/>
<path d="M49 2.8H55.2V9H51V6.8H49Z" fill="#e4e4e4" stroke="#222" stroke-width="0.8"/>
<g fill="#a8a8a8"><rect x="63.5" y="4.5" width="6" height="5"/><rect x="63" y="3.2" width="7" height="0.9"/><rect x="65.5" y="2.2" width="2" height="0.9"/></g>
<path d="M79.5 11L85.5 5" stroke="#a6a6a6" stroke-width="0.7"/><path d="M82.5 11L85.5 8" stroke="#a6a6a6" stroke-width="0.7"/>
</svg>
<div class="a" style="left:436px;top:359px;width:140px;height:1px;background:#9c9c9c"></div>
<div class="a" style="left:436px;top:360px;width:140px;height:1px;background:#d2d2d2"></div>
<div class="a" style="left:500px;top:361.3px;width:11.5px;height:1.5px;background:#a0a0a0"></div>
</body></html>
